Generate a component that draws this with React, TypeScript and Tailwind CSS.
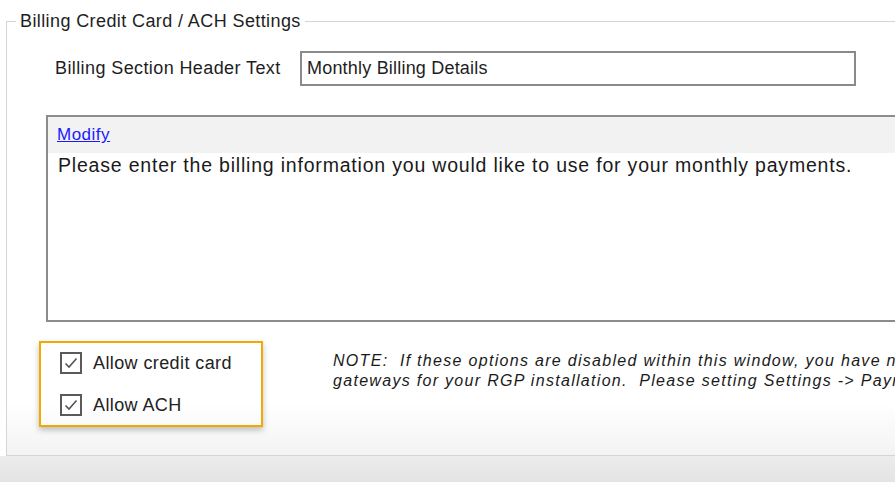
import React from "react";

const font = { fontFamily: '"Liberation Sans", Arial, sans-serif' };

function Check({ label }: { label: string }) {
  return (
    <label className="flex items-center gap-[11px] text-[18px] tracking-[0.4px] text-[#222]">
      <span className="flex h-[22px] w-[22px] items-center justify-center border-2 border-[#5a5a5a] bg-white">
        <svg width="16" height="16" viewBox="0 0 16 16" fill="none">
          <path d="M2.5 8.5 L6 12 L13.5 3.5" stroke="#555" strokeWidth="1.6" />
        </svg>
      </span>
      {label}
    </label>
  );
}

export default function App() {
  return (
    <div className="flex h-[482px] w-[895px] flex-col overflow-hidden bg-white" style={font}>
      <fieldset className="ml-[6px] mt-[11px] h-[445px] w-[1000px] shrink-0 border border-[#d5d5d5] bg-gradient-to-b from-white from-[88%] to-[#f3f3f3]">
        <legend className="ml-[9px] px-[4px] text-[18px] leading-[20px] tracking-[0.4px] text-[#1e1e1e]">
          Billing Credit Card / ACH Settings
        </legend>

        <div className="mt-[20px] flex items-center pl-[48px]">
          <span className="w-[245px] text-[18px] tracking-[0.4px] text-[#1e1e1e]">Billing Section Header Text</span>
          <div className="flex h-[35px] w-[556px] items-center border-2 border-[#8a8a8a] bg-white pl-[5px] text-[18px] tracking-[0.2px] text-[#1e1e1e]">
            Monthly Billing Details
          </div>
        </div>

        <div className="ml-[39px] mt-[29px] h-[207px] border-2 border-[#8c8c8c] bg-white">
          <div className="flex h-[36px] items-center bg-[#f2f2f2] pl-[9px]">
            <a className="text-[17px] tracking-[0.5px] text-[#1a1aff] underline">Modify</a>
          </div>
          <p className="pl-[10px] text-[19.5px] leading-[24px] tracking-[0.8px] text-[#1a1a1a]">
            Please enter the billing information you would like to use for your monthly payments.
          </p>
        </div>

        <div className="mt-[19px] flex items-start">
          <div className="ml-[32px] flex h-[86px] w-[224px] flex-col justify-center gap-[15px] border-2 border-[#f5a800] pl-[19px] shadow-[0_3px_6px_rgba(0,0,0,0.25)]">
            <Check label="Allow credit card" />
            <Check label="Allow ACH" />
          </div>
          <div className="ml-[70px] mt-[10px] whitespace-pre text-[16px] italic leading-[20px] tracking-[1.3px] text-[#1a1a1a]">
            <div>NOTE:  If these options are disabled within this window, you have no</div>
            <div>gateways for your RGP installation.  Please setting Settings -&gt; Paym</div>
          </div>
        </div>
      </fieldset>
      <div className="flex-1 bg-gradient-to-b from-[#ececec] to-[#e4e4e4]" />
    </div>
  );
}
